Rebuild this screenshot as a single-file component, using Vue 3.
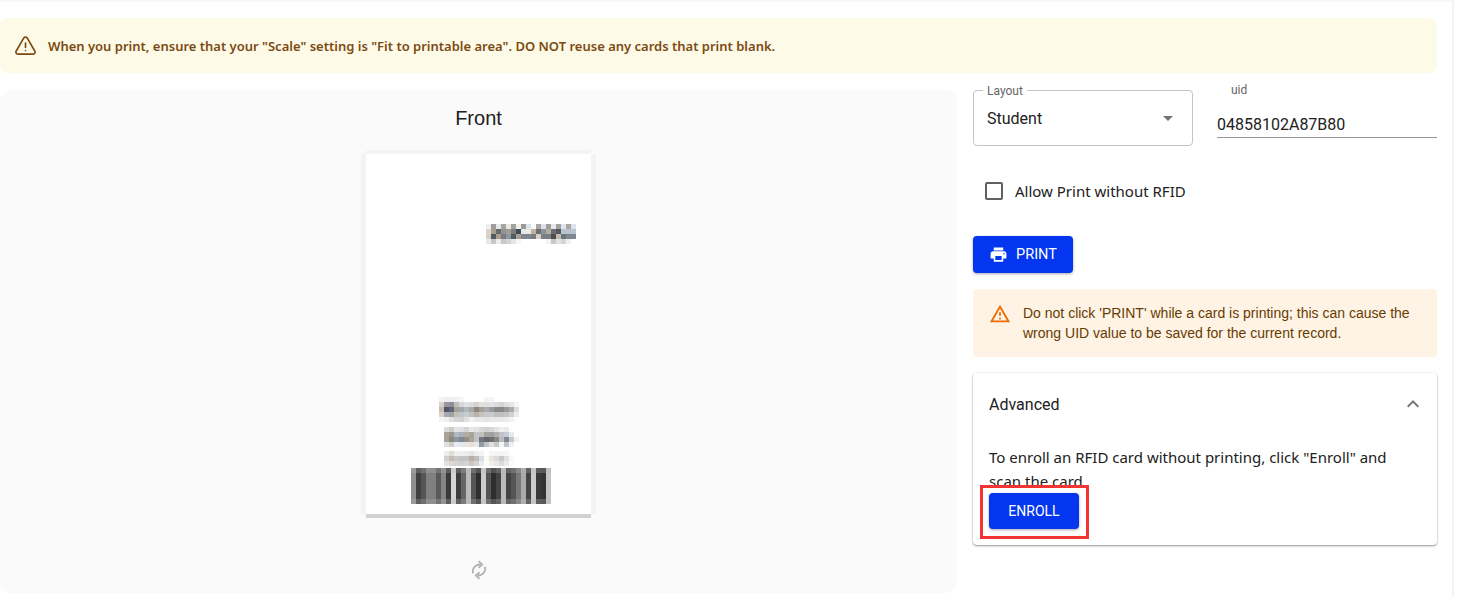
<script setup>
// pixelated bits of the card preview, one string per row
const blocks = [
  { x: 120, y: 70, rows: [
    'f1efea 9d9d9d e8e8e8 a5a5a0 ebe8e4 a3a3a3 f2efe9 9a9a9a dde3ea fafafa a9a49e dce3ec a39d97 e5e8ee a4a09b dfe5ee aba69d dbe3ec',
    'dcd3cb a69e95 696969 8f949b a39c90 7b7f83 424a52 e3e8ec efe6df bab3a8 6e6e6e 8d9299 b3aca1 6d6d6d 52585e b9c3cf b9c3cf b9c3cf',
    'd8cfc6 4f5a63 a89e94 7b7b7f 8d98a3 4f5a63 a99e93 7c8690 7c8690 7a7c80 d8cfc6 78808a 7a8088 4e4e50 c4bcb2 6c747c 7e8690 7e8690',
    'ebe9e6 c8c8c8 ececec c8c8cc d4d4d4 e8e6e4 f6f6f6 ffffff ffffff ffffff ffffff ffffff f4f4f4 c8c8c8 e0e4e8 d8d4d0 eef0f4 ffffff'
  ] },
  { x: 73, y: 243, rows: [
    'f4f4f4 efefef efefef f2f2f2 f6f6f6 ffffff ffffff ffffff ffffff f4f4f4 f4f4f4 ffffff ffffff ffffff ffffff ffffff',
    'd8d2cb 9a98a0 8f8d98 c0bfb8 d5d8dc e0e3e6 dcdcdc d8d2cc e3e0da e0e0e0 e0e2e5 dcdcdc d4d4d4 e0e0e0 e4e6e8 f6f6f6',
    'c5bdb2 55556a 65657a a5a398 a0a8ae b0b8bc a8a8a8 908880 a0a098 a8acb0 989ca0 8a8a8a 888888 989898 a8acb0 dddddd',
    'd8d2cb a8a8b0 a0a0a8 c0bfb8 c0c4c8 c8ccd0 c0c0c0 b8b4ac c8c4bc c8c8c8 c8ccd0 c0c0c0 c0c0c0 c4c4c4 d0d0d0 ececec',
    'f4f4f4 f0f0f0 e0e0e0 d4d4d4 d0d0d0 e0e0e0 f0f0f0 e8e8e8 e8e8e8 e4e4e4 e8e8e8 e8e8e8 e8e8e8 ececec f4f4f4 ffffff'
  ] },
  { x: 78, y: 273, rows: [
    'dedad6 cfcbc5 e0e4e8 dfdfdf d4d4d4 e8e8e8 e0e2e4 d8d8d8 d4d0cc d8d8d8 e4e4e4 f0f0f0 e8eaee ffffff ffffff',
    'a8a29a 9c968c b0bac2 a8b0b8 b0aca4 a8a298 c4c4c4 c0c0c0 a8a29c a0a0a0 b0b0b0 c0c4c8 c8ccd4 e8eaee ffffff',
    'a8a29a 8c887e 8a98a4 808890 948e84 a8a298 c0c4c8 707880 68686c 70706c 8c8884 b8bcc0 808890 c4c8d0 f0f2f6',
    'e0e0e0 d0ccc8 e8ecf0 e4e8ec e8e4e0 e8e0d8 e8e8e8 909aa4 c0c4c8 e0e0e0 c8c8c8 f4f4f4 c0c4c8 f0f0f0 ffffff'
  ] },
  { x: 78, y: 297, rows: [
    'efebe8 e2dcd6 f0f0f0 f0f0f0 ececec e8e4e0 f0f0f0 f4f4f4 ffffff f8f4ee f4f4f4 f4f4f4 f4f6f8 ffffff ffffff',
    'd4d0cc c4bcb4 c8c8c8 c4c4c4 c4c4c4 b8b0a8 c0bcb8 dadee2 fafafa ece4da dcdcdc c8c8c8 dde0e4 f8f8f8 ffffff',
    'e4e2e0 dcd8d4 d4d4d4 d0d0d0 d4d4d4 ccc8c4 d4d4d4 e8ecf0 fcfcfc f2eee8 e8e8e8 dcdcdc e8eaec fcfcfc ffffff'
  ] }
]

const barMid = '8f8f8f 3f3f3f 555555 808080 808080 5a5a5a 858585 3a3a3a d5d5d5 3f3f3f 666666 bbbbbb 555555 2f2f2f cccccc 555555 2e2e2e 444444 bbbbbb 444444 555555 777777 aaaaaa 444444 cccccc 3a3a3a 333333 c4c4c4'.split(' ')

function lighten(hex) {
  // the barcode's top and bottom rows are a washed out copy of the middle
  const v = Math.round(parseInt(hex.slice(0, 2), 16) * 0.72 + 255 * 0.2)
  const h = Math.min(v, 235).toString(16).padStart(2, '0')
  return h + h + h
}

const cells = []
for (const b of blocks) {
  b.rows.forEach((row, r) => {
    row.split(' ').forEach((c, i) => {
      cells.push({ x: b.x + i * 5, y: b.y + r * 5, h: 5, fill: '#' + c })
    })
  })
}
barMid.forEach((c, i) => {
  const x = 45 + i * 5
  cells.push({ x, y: 314, h: 5, fill: '#' + lighten(c) })
  cells.push({ x, y: 319, h: 26, fill: '#' + c })
  cells.push({ x, y: 345, h: 5, fill: '#' + lighten(c) })
})
</script>

<template>
  <div class="page">
    <div class="banner">
      <svg class="banner-icon" viewBox="0 0 24 24" fill="none" stroke="currentColor" stroke-width="1.7" stroke-linecap="round" stroke-linejoin="round">
        <path d="M12 3.2c-.8 0-1.500.4-1.900 1.100L2.200 18c-.8 1.400.2 3 1.800 3h16c1.600 0 2.600-1.600 1.800-3L13.900 4.300c-.4-.7-1.100-1.100-1.900-1.100z" />
        <path d="M12 9.500v4.500M12 17.200v.1" />
      </svg>
      <span>When you print, ensure that your "Scale" setting is "Fit to printable area". DO NOT reuse any cards that print blank.</span>
    </div>

    <div class="columns">
      <section class="preview">
        <h2>Front</h2>
        <div class="card">
          <svg width="225" height="360" viewBox="0 0 225 360" shape-rendering="crispEdges">
            <rect v-for="(c, i) in cells" :key="i" :x="c.x" :y="c.y" width="5" :height="c.h" :fill="c.fill" />
          </svg>
        </div>
        <svg class="flip" viewBox="0 0 24 24" fill="none" stroke="#b4b4b4" stroke-width="2">
          <path d="M5.500 15.500C4.200 11 7.500 6 13.500 6" />
          <path d="M11.500 2.500 15.500 6l-4 3.500" />
          <path d="M18.500 8.500C19.800 13 16.500 18 10.500 18" />
          <path d="M12.500 21.500 8.500 18l4-3.500" />
        </svg>
      </section>

      <aside class="side">
        <div class="fields">
          <div class="select">
            <span class="legend">Layout</span>
            <span>Student</span>
            <svg class="caret" viewBox="0 0 24 24"><path d="M7 10l5 5 5-5z" fill="#757575" /></svg>
          </div>
          <div class="uid">
            <label>uid</label>
            <div class="uid-value">04858102A87B80</div>
          </div>
        </div>

        <div class="check">
          <span class="box"></span>
          <span>Allow Print without RFID</span>
        </div>

        <button class="btn print">
          <svg viewBox="0 0 24 24" fill="#fff"><path d="M19 8H5c-1.660 0-3 1.340-3 3v6h4v4h12v-4h4v-6c0-1.660-1.340-3-3-3zm-3 11H8v-5h8v5zm3-7c-.55 0-1-.45-1-1s.45-1 1-1 1 .45 1 1-.45 1-1 1zm-1-9H6v4h12V3z" /></svg>
          PRINT
        </button>

        <div class="warning">
          <svg viewBox="0 0 24 24" fill="#ed6c02"><path d="M12 5.990 19.530 19H4.470L12 5.990M12 2 1 21h22L12 2zm1 14h-2v2h2v-2zm0-6h-2v4h2v-4z" /></svg>
          <p>Do not click 'PRINT' while a card is printing; this can cause the wrong UID value to be saved for the current record.</p>
        </div>

        <div class="advanced">
          <div class="adv-head">
            <span>Advanced</span>
            <svg viewBox="0 0 24 24" fill="#757575"><path d="M12 8l-6 6 1.410 1.410L12 10.830l4.590 4.580L18 14z" /></svg>
          </div>
          <p class="adv-text">To enroll an RFID card without printing, click "Enroll" and scan the card</p>
          <div class="enroll-wrap">
            <button class="btn enroll">ENROLL</button>
            <div class="marker"></div>
          </div>
        </div>
      </aside>
    </div>
  </div>
</template>

<style>
html, body {
  margin: 0;
  background: #fff;
  overflow: hidden;
}
</style>

<style scoped>
.page {
  width: 1437px;
  height: 597px;
  box-sizing: content-box;
  padding: 18px 15px 0 0;
  box-sizing: border-box;
  width: 1454px;
  border-right: 2px solid #f3f3f3;
  border-top: 2px solid #f8f8f8;
  padding-top: 16px;
  padding-right: 15px;
  font-family: "Liberation Sans", Arial, sans-serif;
}

.banner {
  height: 55px;
  display: flex;
  align-items: center;
  gap: 11px;
  padding-left: 14px;
  background: #fefae8;
  border-radius: 8px;
  color: #7b4a12;
  font-family: "Noto Sans", sans-serif;
  font-weight: 600;
  font-size: 13px;
}

.banner-icon {
  width: 23px;
  height: 23px;
}

.columns {
  display: flex;
  gap: 16px;
  margin-top: 17px;
}

.preview {
  width: 957px;
  height: 503px;
  flex: none;
  background: #fafafa;
  border-radius: 12px;
  display: flex;
  flex-direction: column;
  align-items: center;
}

h2 {
  margin: 16px 0 0;
  height: 24px;
  line-height: 24px;
  font-size: 20px;
  font-weight: 400;
  color: #212121;
}

.card {
  width: 225px;
  height: 360px;
  margin-top: 24px;
  background: #fff;
  box-shadow: 0 4px 0 #d2d2d2, -5px 0 0 #f3f3f3, 5px 0 0 #f3f3f3, 0 -4px 0 #f4f4f4;
}

.card svg {
  display: block;
}

.flip {
  width: 22px;
  height: 22px;
  margin-top: 45px;
}

.side {
  width: 464px;
  flex: none;
}

.fields {
  display: flex;
  gap: 24px;
}

.select {
  position: relative;
  width: 220px;
  height: 56px;
  box-sizing: border-box;
  border: 1px solid #c4c4c4;
  border-radius: 4px;
  padding-left: 13px;
  display: flex;
  align-items: center;
  font-family: Roboto, sans-serif;
  font-size: 16px;
  color: #212121;
}

.legend {
  position: absolute;
  top: -7px;
  left: 9px;
  padding: 0 4px;
  background: #fff;
  font-size: 12px;
  line-height: 14px;
  color: #666;
}

.caret {
  position: absolute;
  right: 12px;
  top: 15px;
  width: 24px;
  height: 24px;
}

.uid {
  width: 220px;
}

.uid label {
  display: block;
  padding-left: 14px;
  height: 14px;
  line-height: 0;
  font-family: Roboto, sans-serif;
  font-size: 12px;
  color: #666;
}

.uid-value {
  margin-top: 9px;
  height: 24px;
  line-height: 24px;
  padding-bottom: 0;
  border-bottom: 1px solid #949494;
  font-family: Roboto, sans-serif;
  font-size: 16px;
  color: #212121;
}

.check {
  display: flex;
  align-items: center;
  gap: 12px;
  margin: 36px 0 0 12px;
  height: 18px;
  font-family: "Noto Sans", sans-serif;
  font-size: 15px;
  color: #212121;
}

.box {
  width: 18px;
  height: 18px;
  box-sizing: border-box;
  border: 2px solid #616161;
  border-radius: 2px;
}

.btn {
  display: flex;
  align-items: center;
  justify-content: center;
  border: 0;
  border-radius: 4px;
  background: #0336ee;
  color: #fff;
  box-shadow: 0 1px 3px rgba(0, 0, 0, .35);
  font-family: Roboto, sans-serif;
  font-size: 14px;
  padding: 0;
}

.print {
  width: 100px;
  height: 37px;
  margin-top: 36px;
  gap: 8px;
  font-size: 14.5px;
}

.print svg {
  width: 19px;
  height: 19px;
}

.warning {
  display: flex;
  gap: 12px;
  box-sizing: border-box;
  height: 68px;
  margin-top: 16px;
  padding: 14px 16px;
  background: #fff3e6;
  border-radius: 4px;
  color: #663c00;
  font-size: 14px;
  line-height: 20px;
}

.warning svg {
  width: 22px;
  height: 22px;
  flex: none;
}

.warning p {
  margin: 0;
}

.advanced {
  margin-top: 16px;
  height: 172px;
  border-radius: 4px;
  box-shadow: 0 1px 2px rgba(0, 0, 0, .4), 0 0 3px rgba(0, 0, 0, .08);
  padding: 0 16px;
  box-sizing: border-box;
}

.adv-head {
  height: 62px;
  display: flex;
  align-items: center;
  justify-content: space-between;
  font-family: Roboto, sans-serif;
  font-size: 16px;
  color: #212121;
}

.adv-head svg {
  width: 24px;
  height: 24px;
  margin-right: -4px;
}

.adv-text {
  margin: 10px 0 0;
  height: 48px;
  line-height: 24px;
  font-family: "Noto Sans", sans-serif;
  font-size: 15px;
  color: #212121;
}

.enroll-wrap {
  position: relative;
  width: 90px;
}

.enroll {
  width: 90px;
  height: 36px;
}

.marker {
  position: absolute;
  left: -9px;
  top: -8px;
  width: 109px;
  height: 54px;
  box-sizing: border-box;
  border: 3px solid #f53333;
}
</style>
